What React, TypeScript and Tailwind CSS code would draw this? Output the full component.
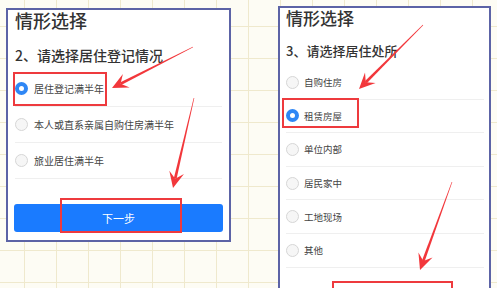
import React from 'react';

const FONT = { fontFamily: '"Noto Sans CJK SC", "Noto Sans", sans-serif' };

interface Arrow {
  x1: number;
  y1: number;
  x2: number;
  y2: number;
}

const arrows: Arrow[] = [
  { x1: 193, y1: 47, x2: 112, y2: 88 },
  { x1: 194, y1: 98, x2: 173, y2: 188 },
  { x1: 423, y1: 25, x2: 359, y2: 89 },
  { x1: 452, y1: 182, x2: 420, y2: 270 },
];

// tapered red line with a swept arrowhead
const arrowPoints = (a: Arrow) => {
  const dx = a.x2 - a.x1;
  const dy = a.y2 - a.y1;
  const len = Math.hypot(dx, dy);
  const ux = dx / len;
  const uy = dy / len;
  const nx = -uy;
  const ny = ux;
  const L = 16;
  const W = 7.5;
  const bx = a.x2 - ux * L * 0.6;
  const by = a.y2 - uy * L * 0.6;
  const shaft = [
    [a.x1 + nx * 0.3, a.y1 + ny * 0.3],
    [bx + nx * 1.4, by + ny * 1.4],
    [bx - nx * 1.4, by - ny * 1.4],
    [a.x1 - nx * 0.3, a.y1 - ny * 0.3],
  ];
  const head = [
    [a.x2, a.y2],
    [a.x2 - ux * L + nx * W, a.y2 - uy * L + ny * W],
    [bx, by],
    [a.x2 - ux * L - nx * W, a.y2 - uy * L - ny * W],
  ];
  const fmt = (p: number[][]) => p.map((q) => q.join(',')).join(' ');
  return { shaft: fmt(shaft), head: fmt(head) };
};

const Radio: React.FC<{ checked?: boolean }> = ({ checked }) =>
  checked ? (
    <span className="w-[13px] h-[13px] rounded-full border-[4px] border-[#2f87f5] bg-white shrink-0" />
  ) : (
    <span className="w-[13px] h-[13px] rounded-full border border-[#d6d6d6] bg-[#f6f6f6] shrink-0" />
  );

const leftOptions = ['居住登记满半年', '本人或直系亲属自购住房满半年', '旅业居住满半年'];
const rightOptions = ['自购住房', '租赁房屋', '单位内部', '居民家中', '工地现场', '其他'];

export default function App() {
  return (
    <div
      className="relative w-[497px] h-[288px] overflow-hidden bg-[#fdfcf4] bg-[linear-gradient(to_right,#efe9cd_1px,transparent_1px),linear-gradient(to_bottom,#efe9cd_1px,transparent_1px)] [background-size:32px_32px] [background-position:24px_26px]"
      style={FONT}
    >
      <div className="flex items-start pl-[6px]">
        {/* left panel */}
        <div className="mt-[8px] w-[225px] h-[234px] border-2 border-[#5c63a6] bg-white px-[7px] flex flex-col">
          <div className="text-[18px] leading-[20px] font-medium text-[#333]">情形选择</div>
          <div className="mt-[15px] text-[14px] leading-[20px] font-medium text-[#333]">2、请选择居住登记情况</div>
          <div className="mt-[6px]">
            {leftOptions.map((o, i) => (
              <div key={o} className="h-[36px] flex items-center gap-[6px] border-b border-[#efefef]">
                <Radio checked={i === 0} />
                <span className="text-[10px] text-[#444]">{o}</span>
              </div>
            ))}
          </div>
          <button className="mt-[25px] h-[28px] rounded-[3px] bg-[#1a7bff] text-white text-[11px] -mx-[1px]">
            下一步
          </button>
        </div>

        {/* right panel */}
        <div className="ml-[47px] mt-[6px] w-[213px] h-[300px] border-2 border-[#5c63a6] bg-white pl-[6px] pr-[5px] flex flex-col">
          <div className="text-[17px] leading-[20px] font-medium text-[#333]">情形选择</div>
          <div className="mt-[14px] text-[13px] leading-[18px] font-medium text-[#333]">3、请选择居住处所</div>
          <div className="mt-[6px]">
            {rightOptions.map((o, i) => (
              <div key={o} className="h-[33.6px] flex items-center gap-[5px] border-b border-[#efefef]">
                <Radio checked={i === 1} />
                <span className="text-[9.5px] text-[#444]">{o}</span>
              </div>
            ))}
          </div>
        </div>
      </div>

      {/* annotations */}
      <div className="absolute left-[13px] top-[72px] w-[94px] h-[34px] border-2 border-[#ee3a3e]" />
      <div className="absolute left-[60px] top-[198px] w-[122px] h-[35px] border-2 border-[#ee3a3e]" />
      <div className="absolute left-[282px] top-[98px] w-[77px] h-[30px] border-2 border-[#ee3a3e]" />
      <div className="absolute left-[332px] top-[281px] w-[121px] h-[20px] border-2 border-[#ee3a3e]" />
      <svg className="absolute inset-0 pointer-events-none" width="497" height="288">
        {arrows.map((a, i) => {
          const p = arrowPoints(a);
          return (
            <g key={i} fill="#f2373b">
              <polygon points={p.shaft} />
              <polygon points={p.head} />
            </g>
          );
        })}
      </svg>
    </div>
  );
}
